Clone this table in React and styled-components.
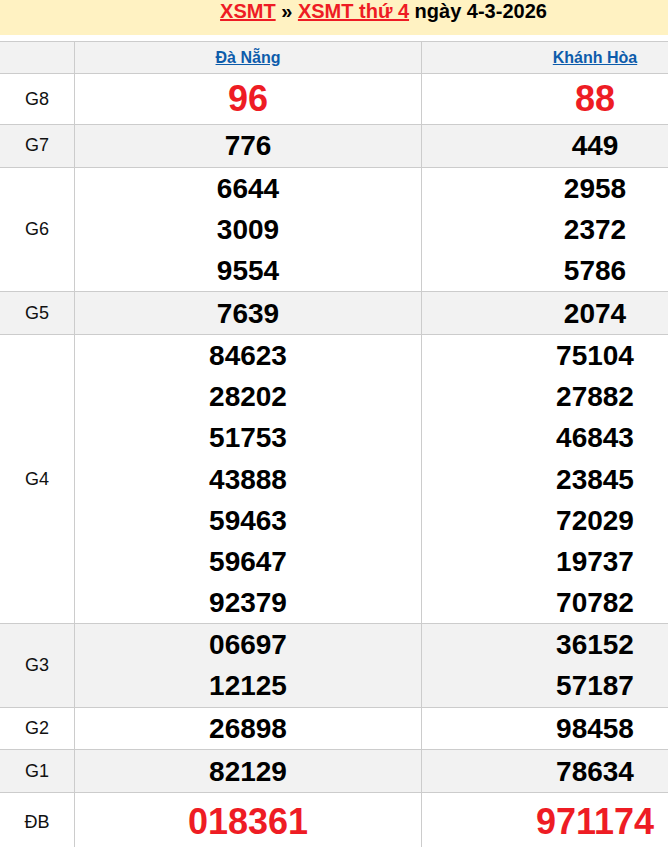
import React from "react";
import styled, { createGlobalStyle } from "styled-components";

const Global = createGlobalStyle`
  html, body { margin: 0; padding: 0; overflow: hidden; background: #fff; }
  body { font-family: "Liberation Sans", Arial, sans-serif; }
`;

const Page = styled.div`
  width: 769px;
`;

const Banner = styled.div`
  background: #fff2c2;
  height: 35px;
  text-align: center;
  font-size: 20px;
  font-weight: bold;
  line-height: 23px;
  color: #000;
  box-sizing: border-box;
  padding-right: 2px;
`;

const RedLink = styled.a`
  color: #ee1c24;
  text-decoration: underline;
`;

const Grid = styled.div`
  margin-top: 6px;
  border-top: 1px solid #cccccc;
  display: grid;
  grid-template-columns: 75px 347px 347px;
`;

const Cell = styled.div`
  background: ${(p) => (p.$shade ? "#f2f2f2" : "#ffffff")};
  border-right: 1px solid #cccccc;
  border-bottom: 1px solid #cccccc;
  display: flex;
  flex-direction: column;
  align-items: center;
  justify-content: center;
  padding: ${(p) => (p.$db ? "2px 0 0" : p.$big ? "0" : "0.25px 0")};
  min-height: ${(p) => (p.$db ? 54 : 0)}px;
`;

const Label = styled.span`
  font-size: 18px;
  color: #111;
`;

const ProvLink = styled.a`
  font-size: 16px;
  font-weight: bold;
  color: #0d5cab;
  text-decoration: underline;
  line-height: 31px;
`;

const Num = styled.div`
  font-weight: bold;
  font-size: ${(p) => (p.$big ? 36 : 28)}px;
  line-height: ${(p) => (p.$big ? "50px" : "41.1px")};
  color: ${(p) => (p.$red ? "#ee1c24" : "#000")};
  text-align: center;
`;

const rows = [
  { label: "G8", a: ["96"], b: ["88"], big: true, red: true },
  { label: "G7", a: ["776"], b: ["449"] },
  { label: "G6", a: ["6644", "3009", "9554"], b: ["2958", "2372", "5786"] },
  { label: "G5", a: ["7639"], b: ["2074"] },
  {
    label: "G4",
    a: ["84623", "28202", "51753", "43888", "59463", "59647", "92379"],
    b: ["75104", "27882", "46843", "23845", "72029", "19737", "70782"],
  },
  { label: "G3", a: ["06697", "12125"], b: ["36152", "57187"] },
  { label: "G2", a: ["26898"], b: ["98458"] },
  { label: "G1", a: ["82129"], b: ["78634"] },
  { label: "ĐB", a: ["018361"], b: ["971174"], big: true, red: true, db: true },
];

export default function App() {
  return (
    <Page>
      <Global />
      <Banner>
        <RedLink href="#">XSMT</RedLink> » <RedLink href="#">XSMT thứ 4</RedLink> ngày 4-3-2026
      </Banner>
      <Grid>
        <Cell $shade $big />
        <Cell $shade $big>
          <ProvLink href="#">Đà Nẵng</ProvLink>
        </Cell>
        <Cell $shade $big>
          <ProvLink href="#">Khánh Hòa</ProvLink>
        </Cell>
        {rows.map((r, i) => {
          const shade = i % 2 === 1;
          return (
            <React.Fragment key={r.label}>
              <Cell $shade={shade} $big={r.big} $db={r.db}>
                <Label>{r.label}</Label>
              </Cell>
              <Cell $shade={shade} $big={r.big} $db={r.db}>
                {r.a.map((n) => (
                  <Num key={n} $big={r.big} $red={r.red}>{n}</Num>
                ))}
              </Cell>
              <Cell $shade={shade} $big={r.big} $db={r.db}>
                {r.b.map((n) => (
                  <Num key={n} $big={r.big} $red={r.red}>{n}</Num>
                ))}
              </Cell>
            </React.Fragment>
          );
        })}
      </Grid>
    </Page>
  );
}
